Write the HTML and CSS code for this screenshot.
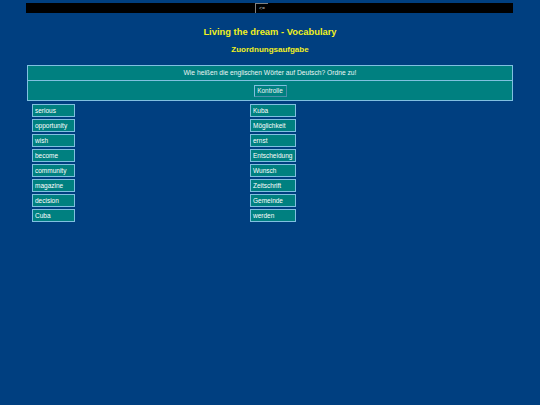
FILE: index.html
```html
<!DOCTYPE html>
<html lang="de">
<head>
<meta charset="utf-8">
<title>Living the dream - Vocabulary</title>
<link rel="stylesheet" href="styles.css">
</head>
<body>
<div class="topbar"><span class="back">&lt;=</span></div>
<h1 class="title">Living the dream - Vocabulary</h1>
<h2 class="subtitle">Zuordnungsaufgabe</h2>
<div class="panel">
  <div class="row instr">Wie heißen die englischen Wörter auf Deutsch? Ordne zu!</div>
  <div class="row ctrl"><span class="btn">Kontrolle</span></div>
</div>
<div class="cols">
  <div class="col">
    <div class="card">serious</div>
    <div class="card">opportunity</div>
    <div class="card">wish</div>
    <div class="card">become</div>
    <div class="card">community</div>
    <div class="card">magazine</div>
    <div class="card">decision</div>
    <div class="card">Cuba</div>
  </div>
  <div class="col right">
    <div class="card">Kuba</div>
    <div class="card">Möglichkeit</div>
    <div class="card">ernst</div>
    <div class="card">Entscheidung</div>
    <div class="card">Wunsch</div>
    <div class="card">Zeitschrift</div>
    <div class="card">Gemeinde</div>
    <div class="card">werden</div>
  </div>
</div>
</body>
</html>
```
FILE: styles.css
```css
html, body {
  margin: 0;
  padding: 0;
}
body {
  background: #003f80;
  width: 540px;
  height: 405px;
  font-family: "Liberation Sans", Arial, sans-serif;
  color: #ffffff;
  overflow: hidden;
}
.topbar {
  margin: 3px 27px 0 26px;
  height: 10px;
  background: #000000;
  display: flex;
  padding-left: 229px;
}
.back {
  box-sizing: border-box;
  width: 13px;
  height: 10px;
  border-left: 1px solid #808080;
  border-top: 1px solid #808080;
  font-size: 5px;
  line-height: 8px;
  color: #c0c0c0;
  text-align: center;
}
.title {
  margin: 13px 0 0 0;
  text-align: center;
  font-size: 9.4px;
  line-height: 11px;
  font-weight: bold;
  color: #f0f020;
}
.subtitle {
  margin: 8px 0 0 0;
  text-align: center;
  font-size: 8px;
  line-height: 10px;
  font-weight: bold;
  color: #f0f020;
}
.panel {
  margin: 10px 27px 0 27px;
  width: 486px;
  box-sizing: border-box;
  background: #008080;
  border: 1px solid #80c0e0;
}
.row {
  text-align: center;
  font-size: 6.7px;
  color: #eef6f6;
}
.instr {
  height: 14px;
  line-height: 14px;
  border-bottom: 1px solid #80c0e0;
}
.ctrl {
  height: 19px;
  display: flex;
  justify-content: center;
  align-items: center;
}
.btn {
  box-sizing: border-box;
  height: 12px;
  width: 33px;
  line-height: 10px;
  border: 1px solid #80c0e0;
  border-right-color: #4c8fa8;
  border-bottom-color: #4c8fa8;
  background: #008080;
  font-size: 6.5px;
}
.cols {
  display: grid;
  grid-template-columns: 218px 60px;
  margin: 3px 0 0 32px;
}
.col {
  display: flex;
  flex-direction: column;
  gap: 2px;
}
.card {
  box-sizing: border-box;
  width: 43px;
  height: 13px;
  border: 1px solid #80c0e0;
  background: #008080;
  font-size: 6.5px;
  line-height: 11px;
  padding-left: 2px;
  white-space: nowrap;
  overflow: hidden;
}
.right .card {
  width: 46px;
}
```
